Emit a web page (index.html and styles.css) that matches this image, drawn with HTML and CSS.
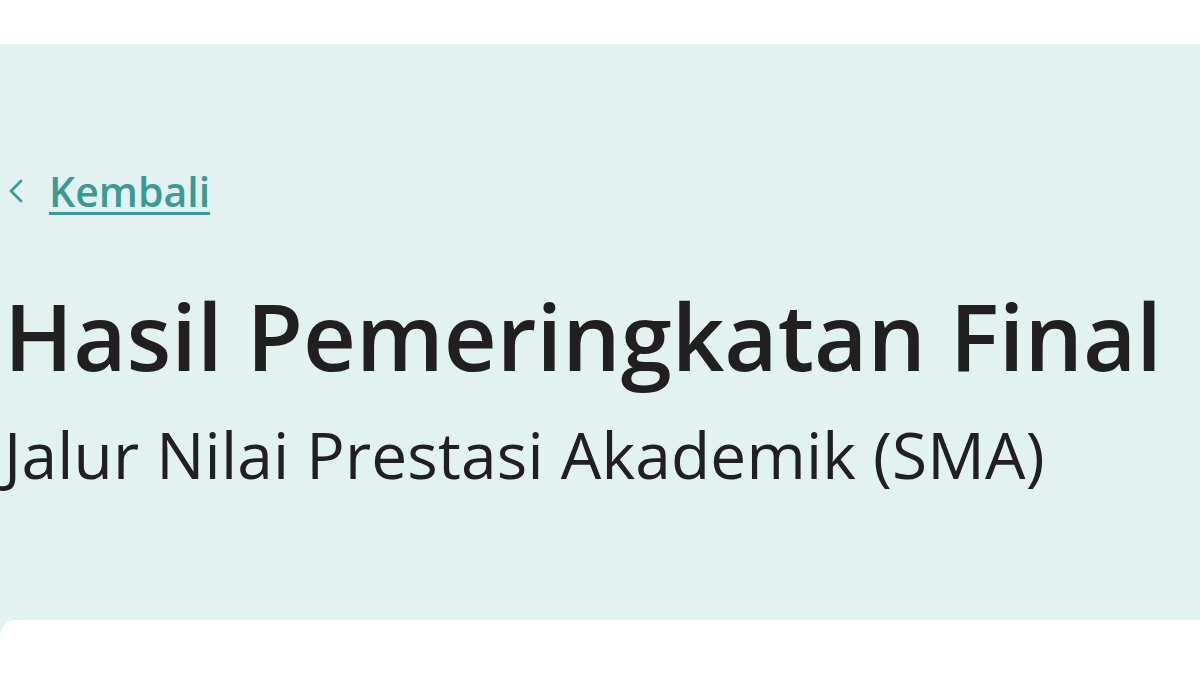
FILE: index.html
```html
<!DOCTYPE html>
<html lang="id">

<head>
    <meta charset="UTF-8">
    <meta name="viewport" content="width=device-width, initial-scale=1.0">
    <title>Hasil Pemeringkatan Final</title>
    <link rel="stylesheet" href="styles.css">
</head>

<body>
    <div class="topbar"></div>
    <section class="hero">
        <a class="back" href="#">
            <svg class="back-icon" width="18" height="26" viewBox="0 0 18 26">
                <path d="M14 3 L4 13 L14 23" fill="none" stroke="currentColor" stroke-width="2.8" stroke-linecap="round" stroke-linejoin="round" />
            </svg>
            <span class="back-text">Kembali</span>
        </a>
        <h1 class="title">Hasil Pemeringkatan Final</h1>
        <h2 class="subtitle">Jalur Nilai Prestasi Akademik (SMA)</h2>
    </section>
    <div class="card"></div>
</body>

</html>
```
FILE: styles.css
```css
* {
    box-sizing: border-box;
}

body {
    margin: 0;
    background-color: #e2f2f1;
    font-family: "Open Sans", "Noto Sans", sans-serif;
    overflow: hidden;
}

.topbar {
    height: 44px;
    background-color: #ffffff;
}

.hero {
    height: 576px;
    padding: 124px 0 0 4px;
    background-color: #e2f2f1;
}

.back {
    display: flex;
    align-items: center;
    gap: 24px;
    color: #3c9a94;
    text-decoration: none;
}

.back-icon {
    margin-left: 3px;
}

.back-text {
    font-size: 41px;
    font-weight: 600;
    line-height: 46px;
    text-decoration: underline;
    text-decoration-thickness: 3px;
    text-underline-offset: 5px;
}

.title {
    margin: 72px 0 0;
    font-size: 92px;
    font-weight: 600;
    line-height: 100px;
    color: #202020;
}

.subtitle {
    margin: 34px 0 0;
    font-size: 64px;
    font-weight: 500;
    line-height: 70px;
    letter-spacing: 0.2px;
    color: #202020;
}

.card {
    height: 80px;
    background-color: #ffffff;
    border-radius: 16px 0 0 0;
}
```
